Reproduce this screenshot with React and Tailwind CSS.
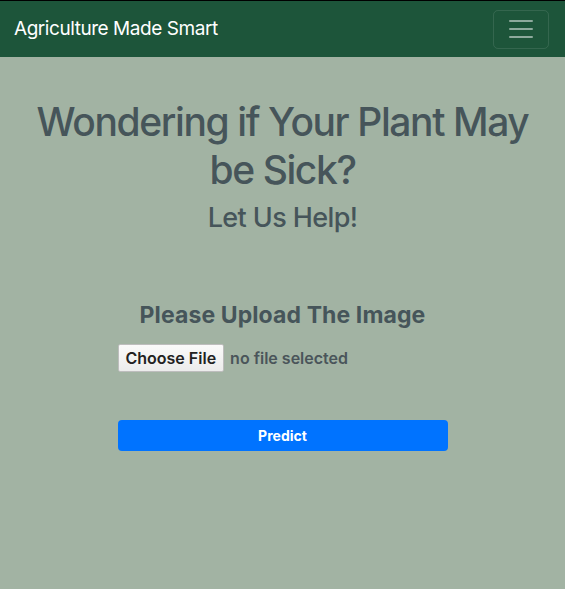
import { useState } from 'react';

function Toggler() {
  return (
    <button className="flex h-[39px] w-[56px] items-center justify-center rounded-[5px] border border-white/10">
      <svg width="30" height="30" viewBox="0 0 30 30" className="text-white/50">
        <path d="M4 7h22M4 15h22M4 23h22" stroke="currentColor" strokeWidth="2" strokeLinecap="round" />
      </svg>
    </button>
  );
}

export default function App() {
  const [fileName, setFileName] = useState('');

  return (
    <div className="min-h-[589px] bg-[#a2b3a3] font-['Inter','Liberation_Sans',sans-serif] text-[#46555a]">
      {/* navbar */}
      <nav className="flex h-[57px] items-center justify-between border-t border-black bg-[#1d553a] pl-[14px] pr-[16px]">
        <span className="text-[19px] tracking-[-0.45px] text-white">Agriculture Made Smart</span>
        <Toggler />
      </nav>

      <main className="flex flex-col items-center px-4 pt-[41px]">
        <h1 className="max-w-[510px] text-center text-[39px] font-medium leading-[48px] tracking-[-1.4px]">
          Wondering if Your Plant May be Sick?
        </h1>
        <h3 className="mt-[7px] text-[27px] font-medium leading-[34px] tracking-[-0.6px]">Let Us Help!</h3>

        <form className="mt-[66px] flex w-[330px] flex-col items-center" onSubmit={e => e.preventDefault()}>
          <h4 className="text-[23px] font-bold leading-[28px] tracking-[0.1px]">Please Upload The Image</h4>

          <label className="mt-[15px] flex items-center gap-[6px] self-start">
            <span className="flex h-[28px] items-center rounded-[2px] border border-[#bdbdbd] bg-gradient-to-b from-[#fafafa] to-[#ececec] px-[7px] text-[16px] font-semibold text-[#222]">
              Choose File
            </span>
            <span className="text-[16px] font-semibold text-[#4a555a]">{fileName || 'no file selected'}</span>
            <input
              type="file"
              className="hidden"
              onChange={e => setFileName(e.target.files[0]?.name || '')}
            />
          </label>

          <button
            type="submit"
            className="mt-[48px] h-[31px] w-full rounded-[4px] bg-[#0073ff] text-[14px] font-bold text-white"
          >
            Predict
          </button>
        </form>
      </main>
    </div>
  );
}
